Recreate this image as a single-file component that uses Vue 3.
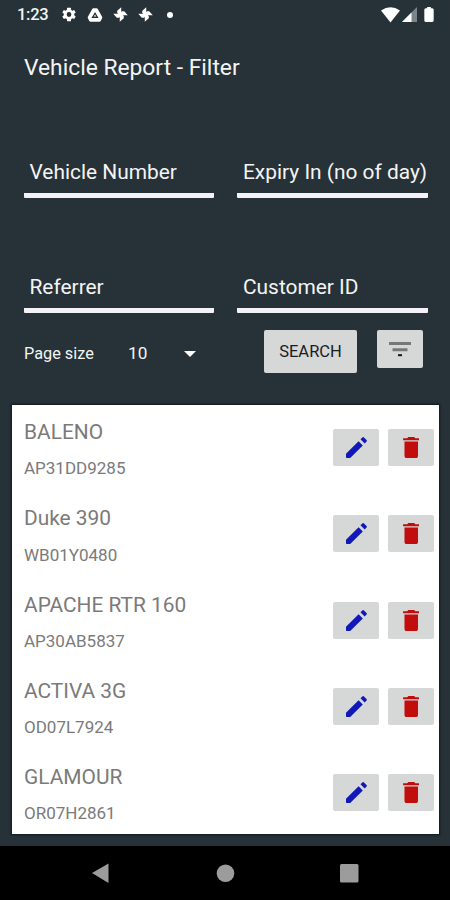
<script setup>
const fields = ['Vehicle Number', 'Expiry In (no of day)', 'Referrer', 'Customer ID']
const vehicles = [
  { name: 'BALENO', plate: 'AP31DD9285' },
  { name: 'Duke 390', plate: 'WB01Y0480' },
  { name: 'APACHE RTR 160', plate: 'AP30AB5837' },
  { name: 'ACTIVA 3G', plate: 'OD07L7924' },
  { name: 'GLAMOUR', plate: 'OR07H2861' },
]
</script>

<template>
  <div class="screen">
    <header class="status">
      <span class="clock">1:23</span>
      <svg class="gear" viewBox="2 2 20 20"><path fill-rule="evenodd" d="M19.4 13a7.500 7.500 0 0 0 0-2l2.200-1.700-2.200-3.800-2.600 1a8 8 0 0 0-1.700-1L14.700 2.500H9.300L8.900 5.500a8 8 0 0 0-1.700 1l-2.600-1-2.200 3.800L4.600 11a7.500 7.500 0 0 0 0 2l-2.200 1.700 2.200 3.800 2.600-1a8 8 0 0 0 1.700 1l.4 3h5.400l.4-3a8 8 0 0 0 1.700-1l2.600 1 2.200-3.800zM12 8.600a3.400 3.400 0 1 1 0 6.800 3.400 3.400 0 0 1 0-6.800z" /></svg>
      <svg class="drive" viewBox="0 0 16 15"><path fill-rule="evenodd" d="M5 1Q5.500.3 6.400.3h3.200q.9 0 1.400.7l4.600 8.300q.5.900 0 1.700l-1.500 2.800q-.5.800-1.400.8H3.300q-.9 0-1.400-.8L.4 11q-.5-.8 0-1.700zM8 4.200 4.200 10.800h7.600zM8 6.900l1.300 2.300h-2.600z" /></svg>
      <svg v-for="n in 2" :key="n" class="fan" viewBox="0 0 16 16"><path v-for="a in [0, 90, 180, 270]" :key="a" :transform="`rotate(${a} 8 8)`" d="M8.800 9V.3L4.500 4V6.500L7.500 9Z" /></svg>
      <i class="dot"></i>
      <span class="grow"></span>
      <svg class="wifi" viewBox="0 0 19 16"><path d="M0 3.500Q9.500-3 19 3.500L9.500 15.500Z" /></svg>
      <svg class="signal" viewBox="0 0 15 15"><path d="M0 15 15 0V15Z" opacity=".4" /><path d="M0 15 9.500 5.500V15Z" /></svg>
      <svg class="battery" viewBox="0 0 10 16"><path d="M3 0h4v1.300h1.500Q10 1.500 10 3v11.500Q10 16 8.500 16h-7Q0 16 0 14.500V3Q0 1.500 1.500 1.300H3z" /></svg>
    </header>
    <h1>Vehicle Report - Filter</h1>
    <section class="fields">
      <div v-for="f in fields" :key="f" class="field">{{ f }}</div>
    </section>
    <section class="controls">
      <span class="caption">Page size</span>
      <span class="size">10</span>
      <svg class="caret" viewBox="0 0 12 6"><path d="M0 0h12L6 6z" /></svg>
      <span class="grow"></span>
      <button class="search">SEARCH</button>
      <button class="filter">
        <svg viewBox="0 0 22 16"><path fill="#777" d="M0 1h22v3H0zM3.500 7.300h15v3h-15z" /><path fill="#171717" d="M9 13.200h4v2H9z" /></svg>
      </button>
    </section>
    <main class="list">
      <div v-for="v in vehicles" :key="v.plate" class="row">
        <div class="info">
          <div class="name">{{ v.name }}</div>
          <div class="plate">{{ v.plate }}</div>
        </div>
        <button class="tile"><svg class="pencil" viewBox="0 0 21 21"><path d="M0 16.800 12.600 4.200 16.800 8.400 4.200 21H0.700Q0 21 0 20.300zM14.500 2.300 16.300.5Q17.200-.3 18 .5L20.500 3Q21.300 3.800 20.500 4.600L18.700 6.500z" /></svg></button>
        <button class="tile"><svg class="trash" viewBox="5 3 14 18"><path d="M6.200 19c0 1.100.7 2 1.800 2h8c1.100 0 1.800-.9 1.800-2V6.800H6.200v12.200zM19 4h-3.500l-1-1h-5l-1 1H5v1.700h14V4z" /></svg></button>
      </div>
    </main>
    <nav>
      <svg viewBox="0 0 450 54">
        <path d="M92 27 108.500 17.500V37Z" />
        <circle cx="225.500" cy="27.300" r="8.800" />
        <rect x="340" y="18" width="18.500" height="18.500" rx="1.500" />
      </svg>
    </nav>
  </div>
</template>

<style>
body { margin: 0; background: #263238; }
</style>
<style scoped>
.screen { width: 450px; height: 900px; display: flex; flex-direction: column; background: #263238; font-family: Roboto, sans-serif; color: #f4f4f4; overflow: hidden; }
svg { display: block; flex: none; fill: #fff; }
button { border: 0; padding: 0; background: #d6d7d7; border-radius: 2px; display: flex; align-items: center; justify-content: center; font-family: inherit; flex: none; }
.grow { flex: 1; }
.status { height: 29px; flex: none; display: flex; align-items: center; padding: 0 15px 0 17px; box-sizing: border-box; }
.clock { font-size: 16.500px; font-weight: 500; line-height: 29px; width: 45px; letter-spacing: -.3px; }
.gear { width: 14px; height: 15px; }
.drive { width: 16px; height: 14px; margin-left: 11px; }
.fan { width: 15px; height: 15px; margin-left: 10px; }
.dot { width: 6px; height: 6px; border-radius: 50%; background: #fff; margin-left: 14px; }
.wifi { width: 19px; height: 16px; }
.signal { width: 15px; height: 15px; margin-left: 2px; }
.battery { width: 10px; height: 15px; margin-left: 7px; margin-right: 1px; margin-bottom: 1px; }
h1 { margin: 0; height: 77px; flex: none; padding-left: 24px; font-size: 22.800px; font-weight: 400; line-height: 78px; white-space: nowrap; }
.fields { display: grid; grid-template-columns: 190.500px 191px; column-gap: 23px; padding-left: 23.500px; grid-template-rows: 91.500px 115.500px; height: 207px; flex: none; }
.field { box-sizing: border-box; border-bottom: 5px solid #f4f2f6; border-radius: 1px; display: flex; align-items: flex-end; padding: 0 0 9px 6px; font-size: 20.900px; line-height: 24px; white-space: nowrap; }
.controls { height: 92px; flex: none; display: flex; align-items: flex-start; box-sizing: border-box; padding: 17px 27px 0 24px; }
.caption { width: 104px; font-size: 16.300px; line-height: 48px; }
.size { width: 56px; font-size: 17.200px; line-height: 47px; }
.caret { width: 12px; height: 6px; margin-top: 20.500px; }
.search { width: 93px; height: 43px; color: #1c1c1c; font-size: 16.500px; }
.filter { width: 46px; height: 38px; margin-left: 20px; }
.filter svg { width: 22px; height: 16px; }
.list { width: 427.500px; height: 429px; margin-left: 11.500px; flex: none; background: #fff; box-shadow: 0 0 2px 1px #10191e; overflow: hidden; }
.row { height: 86.250px; display: flex; align-items: flex-start; box-sizing: border-box; padding: 12px 5px 0 12.500px; }
.info { flex: 1; color: #7a7a7a; white-space: nowrap; }
.name { font-size: 20.900px; line-height: 30px; }
.plate { font-size: 17px; line-height: 24px; margin-top: 9.400px; }
.tile { width: 46px; height: 37px; margin-top: 12px; }
.tile + .tile { margin-left: 9px; }
.pencil { width: 21px; height: 21px; fill: #1018b8; }
.trash { width: 16.500px; height: 21px; fill: #c20d0d; }
nav { height: 54px; margin-top: auto; background: #000; flex: none; }
nav svg { width: 450px; height: 54px; fill: #9c9c9c; }
</style>
